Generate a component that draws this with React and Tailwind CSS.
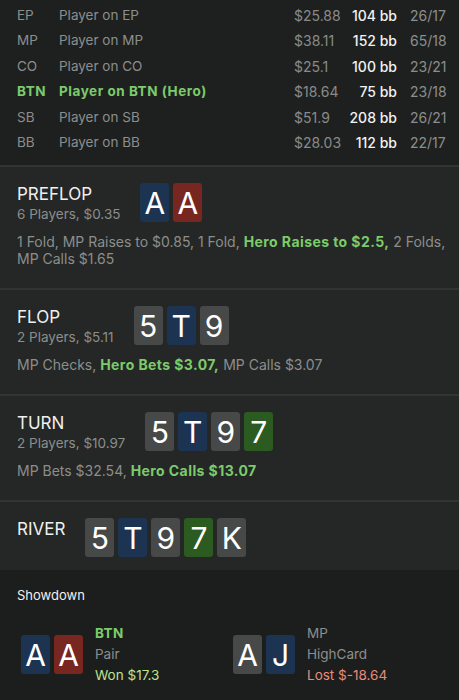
import React from 'react';

const CARD_BG = {
  b: 'bg-[#1c3351]',
  r: 'bg-[#782620]',
  g: 'bg-[#474848]',
  n: 'bg-[#2b5b20]',
};

const players = [
  { pos: 'EP', name: 'Player on EP', money: '$25.88', bb: '104 bb', vp: '26/17' },
  { pos: 'MP', name: 'Player on MP', money: '$38.11', bb: '152 bb', vp: '65/18' },
  { pos: 'CO', name: 'Player on CO', money: '$25.1', bb: '100 bb', vp: '23/21' },
  { pos: 'BTN', name: 'Player on BTN (Hero)', money: '$18.64', bb: '75 bb', vp: '23/18', hero: true },
  { pos: 'SB', name: 'Player on SB', money: '$51.9', bb: '208 bb', vp: '26/21' },
  { pos: 'BB', name: 'Player on BB', money: '$28.03', bb: '112 bb', vp: '22/17' },
];

const streets = [
  {
    name: 'PREFLOP',
    info: '6 Players, $0.35',
    cards: [['A', 'b'], ['A', 'r']],
    actions: [
      { t: '1 Fold, MP Raises to $0.85, 1 Fold, ' },
      { t: 'Hero Raises to $2.5,', hero: true },
      { t: ' 2 Folds, MP Calls $1.65' },
    ],
  },
  {
    name: 'FLOP',
    info: '2 Players, $5.11',
    cards: [['5', 'g'], ['T', 'b'], ['9', 'g']],
    actions: [
      { t: 'MP Checks, ' },
      { t: 'Hero Bets $3.07,', hero: true },
      { t: ' MP Calls $3.07' },
    ],
  },
  {
    name: 'TURN',
    info: '2 Players, $10.97',
    cards: [['5', 'g'], ['T', 'b'], ['9', 'g'], ['7', 'n']],
    actions: [
      { t: 'MP Bets $32.54, ' },
      { t: 'Hero Calls $13.07', hero: true },
    ],
  },
  {
    name: 'RIVER',
    cards: [['5', 'g'], ['T', 'b'], ['9', 'g'], ['7', 'n'], ['K', 'g']],
  },
];

const Card = ({ rank, suit }) => (
  <div
    className={`w-[29px] h-[39px] rounded-[3px] flex items-center justify-center text-[30px] leading-none text-white ${CARD_BG[suit]}`}
  >
    {rank}
  </div>
);

const Cards = ({ cards }) => (
  <div className="flex gap-1">
    {cards.map(([r, s], i) => (
      <Card key={i} rank={r} suit={s} />
    ))}
  </div>
);

const Street = ({ street }) => (
  <div
    className={`border-t-2 border-[#313432] bg-[#242725] pl-[17px] pr-3 pt-4 ${
      street.actions ? 'pb-[21px]' : 'pb-[12px]'
    }`}
  >
    <div className="flex items-start">
      <div className="h-[40px] mr-5">
        <div className="text-[17px] leading-[22px] text-[#f0f0f0]">{street.name}</div>
        {street.info && (
          <div className="text-[13.5px] leading-[18px] text-[#8c8e8d]">{street.info}</div>
        )}
      </div>
      <Cards cards={street.cards} />
    </div>
    {street.actions && (
      <div className="mt-[10px] text-[14px] leading-[17px] text-[#8c8e8d]">
        {street.actions.map((a, i) =>
          a.hero ? (
            <span key={i} className="font-bold tracking-[0.03em] text-[#7ccb6b]">
              {a.t}
            </span>
          ) : (
            <span key={i}>{a.t}</span>
          )
        )}
      </div>
    )}
  </div>
);

const ShowdownPlayer = ({ cards, pos, hand, result, won }) => (
  <div className="w-[212px] flex items-center">
    <Cards cards={cards} />
    <div className="ml-3 text-[13.5px] leading-[21px]">
      <div className={won ? 'font-bold tracking-[0.03em] text-[#7ccb6b]' : 'text-[#8c8e8d]'}>{pos}</div>
      <div className="text-[#8c8e8d]">{hand}</div>
      <div className={won ? 'text-[#bfe391]' : 'text-[#e98b7c]'}>{result}</div>
    </div>
  </div>
);

export default function App() {
  return (
    <div
      className="w-[459px] h-[700px] overflow-hidden bg-[#1e201f] antialiased"
      style={{ fontFamily: 'Inter, "Noto Sans", sans-serif' }}
    >
      {/* Players */}
      <div className="pt-[3px] pb-[10px] text-[13.5px] leading-[25.4px]">
        {players.map((p) => (
          <div key={p.pos} className="flex items-center">
            <div
              className={`w-[42px] pl-[17px] box-content ${
                p.hero ? 'font-bold tracking-[0.04em] text-[#7ccb6b]' : 'text-[#8c8e8d]'
              }`}
            >
              {p.pos}
            </div>
            <div
              className={`w-[235px] ${
                p.hero ? 'font-bold tracking-[0.04em] text-[#7ccb6b]' : 'text-[#8c8e8d]'
              }`}
            >
              {p.name}
            </div>
            <div className="w-[50px] text-[14px] text-[#8a8a8a]">{p.money}</div>
            <div className="w-[53px] text-right text-[14px] font-medium text-[#f2f2f2]">{p.bb}</div>
            <div className="ml-[13px] text-[14px] text-[#8c8e8d]">{p.vp}</div>
          </div>
        ))}
      </div>

      {/* Streets */}
      {streets.map((s) => (
        <Street key={s.name} street={s} />
      ))}

      {/* Showdown */}
      <div className="bg-[#1c1e1d] h-full pt-[15px]">
        <div className="pl-[17px] text-[13px] leading-[20px] text-[#f0f0f0]">Showdown</div>
        <div className="mt-[18px] pl-[21px] flex">
          <ShowdownPlayer cards={[['A', 'b'], ['A', 'r']]} pos="BTN" hand="Pair" result="Won $17.3" won />
          <ShowdownPlayer cards={[['A', 'g'], ['J', 'b']]} pos="MP" hand="HighCard" result="Lost $-18.64" />
        </div>
      </div>
    </div>
  );
}
